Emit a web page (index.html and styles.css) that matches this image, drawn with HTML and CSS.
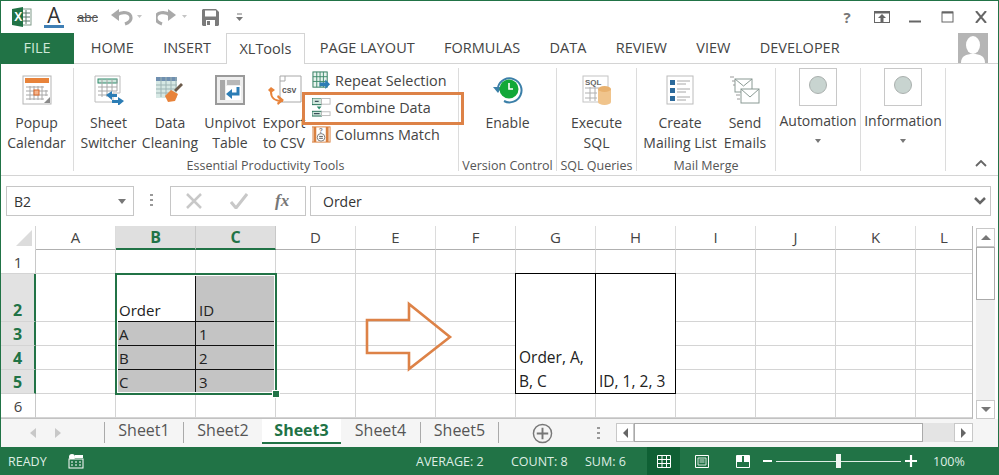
FILE: index.html
```html
<!DOCTYPE html>
<html lang="en">
<head>
<meta charset="utf-8">
<title>XLTools</title>
<link rel="stylesheet" href="styles.css">
</head>
<body>
<div class="window">
  <header class="titlebar">
    <svg class="qa q-excel" viewBox="0 0 20 20"><rect x="9" y="2" width="10" height="16" fill="#fff" stroke="#7f9a89"/><path d="M10 6h8M10 10h8M10 14h8M14 3v14" stroke="#58786a" fill="none"/><path d="M0 2l11-2v20L0 18z" fill="#217346"/><text x="2.3" y="14" class="xl">X</text></svg>
    <span class="qa q-a"><span class="a-letter">A</span><span class="a-bar"></span></span>
    <span class="qa q-abc">abc</span>
    <svg class="qa q-undo" viewBox="0 0 32 18"><path d="M0 7l8-6v12z" fill="#a9a9a9"/><path d="M6 7C11 3 20 4 20 10c0 3-3 5-6 6" fill="none" stroke="#a9a9a9" stroke-width="3.200"/><path d="M26 7h5l-2.500 3z" fill="#c4c4c4"/></svg>
    <svg class="qa q-redo" viewBox="0 0 32 18"><path d="M20 7l-8-6v12z" fill="#a9a9a9"/><path d="M14 7C9 3 0 4 0 10c0 3 3 5 6 6" fill="none" stroke="#a9a9a9" stroke-width="3.200"/><path d="M26 7h5l-2.500 3z" fill="#c4c4c4"/></svg>
    <svg class="qa q-save" viewBox="0 0 17 17"><path d="M1 0h13l3 3v13l-1 1H1l-1-1V1z" fill="#7b7b7b"/><rect x="3" y="1.500" width="11" height="6" fill="#fff"/><rect x="4" y="11" width="9" height="6" fill="#fff"/><rect x="5" y="12" width="3" height="4" fill="#7b7b7b"/></svg>
    <svg class="qa q-more" viewBox="0 0 8 9"><path d="M1 1h5" stroke="#777"/><path d="M0 4h7L3.500 8z" fill="#777"/></svg>
    <div class="winctl">
      <span class="help">?</span>
      <svg class="ctl" viewBox="0 0 16 12"><rect x=".5" y=".5" width="15" height="11" fill="none" stroke="#666"/><path d="M0 1.500h16" stroke="#666" stroke-width="2"/><path d="M8 3l4 4H9.500v4h-3V7H4z" fill="#666"/></svg>
      <svg class="ctl" viewBox="0 0 16 12"><path d="M2 10.500h12" stroke="#666" stroke-width="2"/></svg>
      <svg class="ctl" viewBox="0 0 16 12"><rect x="2" y="1" width="11" height="10" fill="none" stroke="#666"/><path d="M2 1.500h11" stroke="#666" stroke-width="2"/></svg>
      <svg class="ctl" viewBox="0 0 16 12"><path d="M3 0l10 12M13 0L3 12" stroke="#666" stroke-width="2" fill="none"/></svg>
    </div>
  </header>

  <nav class="tabs">
    <span class="tab file">FILE</span>
    <span class="tab">HOME</span>
    <span class="tab">INSERT</span>
    <span class="tab current">XLTools</span>
    <span class="tab">PAGE LAYOUT</span>
    <span class="tab">FORMULAS</span>
    <span class="tab">DATA</span>
    <span class="tab">REVIEW</span>
    <span class="tab">VIEW</span>
    <span class="tab">DEVELOPER</span>
    <svg class="avatar" viewBox="0 0 30 30"><rect width="30" height="30" fill="#b5b5b5"/><ellipse cx="15" cy="12" rx="7" ry="9" fill="#fff"/><path d="M3 30c0-7 5-9 12-9s12 2 12 9z" fill="#fff"/></svg>
  </nav>

  <section class="ribbon">
    <div class="group g-popup">
      <div class="items">
        <div class="btn b-popup">
          <svg class="ico" viewBox="0 0 30 30"><rect x="1" y="1" width="28" height="28" fill="#fff" stroke="#b5b5b5"/><rect x="3" y="3" width="24" height="5" fill="#e8833a"/><path d="M4 12h18M4 16h22M4 20h22M4 24h18M8 11v14M12 11v14M16 11v14M20 11v14M24 15v6" stroke="#a8a8a8" fill="none"/><rect x="12" y="15" width="5" height="5" fill="#f3b48c" stroke="#d9692b"/><path d="M28 28h-6l6-6z" fill="#8a8a8a"/></svg>
          <span class="lbl">Popup<br>Calendar</span>
        </div>
      </div>
    </div>

    <div class="group g-ess">
      <div class="items">
        <div class="btn b-sheet">
          <svg class="ico" viewBox="0 0 30 30"><path d="M1 1h25v17h-7v9H1z" fill="#fff" stroke="#bcbcbc"/><rect x="4" y="4" width="19" height="4" fill="#cfe6dc" stroke="#2d8a6a"/><path d="M4 12h19M4 16h19M4 20h10M8 4v18M13 4v18M18 4v12M23 4v12" stroke="#a8a8a8" fill="none"/><path d="M12 20l6-4v3h5v3h-5v3z" fill="#2c7db5"/><path d="M30 26l-6-4v3h-6v3h6v3z" fill="#2c7db5"/></svg>
          <span class="lbl">Sheet<br>Switcher</span>
        </div>
        <div class="btn b-data">
          <svg class="ico" viewBox="0 0 30 30"><rect x="1" y="2" width="21" height="4" fill="#6f8fb0"/><path d="M1 6h21v17H1z" fill="#d6e8e4"/><path d="M1 10h21M1 14h21M1 18h14M6 2v20M11 2v20M16 2v14M21 2v14" stroke="#9db4b4" fill="none"/><path d="M13 27l-3-6 6-6 7 4-3 7z" fill="#e8833a"/><path d="M19 15l7-7 2 2-7 7z" fill="#6b5a4a"/></svg>
          <span class="lbl">Data<br>Cleaning</span>
        </div>
        <div class="btn b-unpivot">
          <svg class="ico" viewBox="0 0 30 30"><rect x="1" y="1" width="28" height="28" fill="#eee" stroke="#9a9a9a" stroke-width="2"/><rect x="5" y="5" width="5" height="20" fill="#a8a8a8"/><rect x="12" y="5" width="13" height="5" fill="#b8b8b8"/><rect x="11" y="11" width="15" height="14" fill="#fff"/><path d="M23 12v7H15" fill="none" stroke="#2c7db5" stroke-width="3"/><path d="M17 14l-6 5 6 5z" fill="#2c7db5"/></svg>
          <span class="lbl">Unpivot<br>Table</span>
        </div>
        <div class="btn b-export">
          <svg class="ico wide" viewBox="0 0 36 30"><path d="M14 1h21v26H14V6z" fill="#fff" stroke="#a8a8a8"/><path d="M14 6h5V1" fill="none" stroke="#a8a8a8"/><text x="16" y="18" class="csv">CSV</text><path d="M5 12l4 3-4 3-3-3z" fill="#e8833a"/><path d="M5 17c0 6 3 9 12 9" fill="none" stroke="#e8833a" stroke-width="2"/><path d="M12 20l6 5-6 5-1-2 3-3-3-3z" fill="#e8833a"/></svg>
          <span class="lbl">Export<br>to CSV</span>
        </div>
        <div class="smalls">
          <div class="small">
            <svg class="sico" viewBox="0 0 20 20"><rect x="1" y="1" width="15" height="16" fill="#e8f3ee" stroke="#2d7a5c"/><path d="M5 1v16M8.500 1v16M12 1v16M1 6h15M1 11h15" stroke="#3e8a6c" fill="none"/><path d="M8 12h6V9l5 5-5 5v-3H8z" fill="#2c7db5"/></svg>
            <span>Repeat Selection</span>
          </div>
          <div class="small">
            <svg class="sico" viewBox="0 0 20 20"><rect x="0" y="0" width="10" height="7" fill="#cfe6dc" stroke="#1f6b52"/><path d="M3 3.500h4" stroke="#123"/><rect x="10" y=".5" width="9" height="6" fill="#fff" stroke="#bbb"/><path d="M5 9h5l-2.500 3z" fill="#2d8a6a"/><rect x="0" y="14" width="10" height="5" fill="#cfe6dc" stroke="#1f6b52"/><path d="M2 16.500h6" stroke="#123"/><rect x="10" y="14.500" width="9" height="4" fill="#fff" stroke="#bbb"/></svg>
            <span>Combine Data</span>
          </div>
          <div class="small">
            <svg class="sico" viewBox="0 0 20 20"><rect x="0" y="2" width="19" height="16" fill="#fff" stroke="#d9803f"/><path d="M3 2v16M16 2v16" stroke="#d9803f" stroke-width="3"/><circle cx="9.500" cy="13" r="4" fill="#fff" stroke="#777"/><path d="M7.500 12h4M7.500 14h4" stroke="#555"/><text x="7" y="8" class="q">?</text></svg>
            <span>Columns Match</span>
          </div>
          <div class="mark"></div>
        </div>
      </div>
      <div class="gname">Essential Productivity Tools</div>
    </div>

    <div class="group g-ver">
      <div class="items">
        <div class="btn b-full">
          <svg class="ico" viewBox="0 0 30 30"><path d="M5 12A12 12 0 1 1 11 26" fill="none" stroke="#3b7fa8" stroke-width="2"/><path d="M0 12h9l-4 6z" fill="#3b7fa8"/><circle cx="16" cy="14" r="9.500" fill="#12a838"/><path d="M16 8v6h4" fill="none" stroke="#fff" stroke-width="1.600"/></svg>
          <span class="lbl">Enable</span>
        </div>
      </div>
      <div class="gname">Version Control</div>
    </div>

    <div class="group g-sql">
      <div class="items">
        <div class="btn b-full">
          <svg class="ico" viewBox="0 0 30 30"><rect x="1" y="1" width="25" height="26" fill="#fff" stroke="#c4c4c4"/><text x="3" y="10" class="sqlt">SQL</text><path d="M3 13h14M3 18h12M3 23h12M8 12v14M13 12v14" stroke="#b0b0b0" fill="none"/><path d="M16 14h13v13a6.500 3 0 0 1-13 0z" fill="#f0c48c"/><ellipse cx="22.500" cy="14" rx="6.500" ry="3" fill="#e8b16e"/></svg>
          <span class="lbl">Execute<br>SQL</span>
        </div>
      </div>
      <div class="gname">SQL Queries</div>
    </div>

    <div class="group g-mail">
      <div class="items">
        <div class="btn b-create">
          <svg class="ico" viewBox="0 0 30 30"><rect x="2" y="1" width="26" height="28" fill="#fff" stroke="#bcbcbc"/><path d="M5 5h5v5H5zM5 13h5v5H5zM5 21h5v5H5z" fill="#2c6a9c"/><path d="M12 6h13M12 9h9M12 14h13M12 17h9M12 22h13M12 25h9" stroke="#a8a8a8" fill="none"/></svg>
          <span class="lbl">Create<br>Mailing List</span>
        </div>
        <div class="btn b-send">
          <svg class="ico" viewBox="0 0 30 30"><rect x="5" y="4" width="17" height="13" fill="#fff" stroke="#8a9a94"/><path d="M5 4l8.500 7L22 4" fill="none" stroke="#8a9a94"/><rect x="11" y="14" width="18" height="14" fill="#fff" stroke="#8a9a94"/><path d="M11 14l9 8 9-8" fill="none" stroke="#8a9a94"/><path d="M0 2h4M2 6h3M3 10h2M6 20h4M7 24h3" stroke="#9a9a9a" fill="none"/></svg>
          <span class="lbl">Send<br>Emails</span>
        </div>
      </div>
      <div class="gname">Mail Merge</div>
    </div>

    <div class="group g-auto">
      <div class="drop">
        <div class="tile"><span class="disc"></span></div>
        <span class="lbl">Automation</span>
        <span class="caret"></span>
      </div>
    </div>
    <div class="group g-info">
      <div class="drop">
        <div class="tile"><span class="disc"></span></div>
        <span class="lbl">Information</span>
        <span class="caret"></span>
      </div>
    </div>
    <svg class="collapse" viewBox="0 0 12 7"><path d="M1 6l5-5 5 5" fill="none" stroke="#666" stroke-width="1.800"/></svg>
  </section>

  <section class="fbar">
    <div class="namebox"><span>B2</span><i class="tri"></i></div>
    <span class="grip"></span>
    <div class="fbtns">
      <svg class="fb" viewBox="0 0 16 16"><path d="M1 1l14 14M15 1L1 15" stroke="#c8c8c8" stroke-width="2.500"/></svg>
      <svg class="fb" viewBox="0 0 18 16"><path d="M1 9l5 6L17 1" fill="none" stroke="#c8c8c8" stroke-width="3"/></svg>
      <span class="fx">fx</span>
    </div>
    <div class="finput"><span>Order</span><svg class="chev" viewBox="0 0 12 8"><path d="M1 1l5 5 5-5" fill="none" stroke="#666" stroke-width="2.500"/></svg></div>
  </section>

  <section class="sheetarea">
    <div class="grid">
      <div class="corner"><i></i></div>
      <div class="ch">A</div><div class="ch on">B</div><div class="ch on">C</div><div class="ch">D</div><div class="ch">E</div><div class="ch">F</div><div class="ch">G</div><div class="ch">H</div><div class="ch">I</div><div class="ch">J</div><div class="ch">K</div><div class="ch">L</div>

      <div class="rh">1</div><div class="c"></div><div class="c"></div><div class="c"></div><div class="c"></div><div class="c"></div><div class="c"></div><div class="c"></div><div class="c"></div><div class="c"></div><div class="c"></div><div class="c"></div><div class="c"></div>

      <div class="rh on">2</div><div class="c"></div><div class="c t tb">Order</div><div class="c t g tb">ID</div><div class="c"></div><div class="c"></div><div class="c"></div><div class="c box span-g">Order, A, B, C</div><div class="c box span-h">ID, 1, 2, 3</div><div class="c"></div><div class="c"></div><div class="c"></div><div class="c"></div>

      <div class="rh on">3</div><div class="c"></div><div class="c t g tb">A</div><div class="c t g tb">1</div><div class="c"></div><div class="c"></div><div class="c"></div><div class="c"></div><div class="c"></div><div class="c"></div><div class="c"></div>

      <div class="rh on">4</div><div class="c"></div><div class="c t g tb">B</div><div class="c t g tb">2</div><div class="c"></div><div class="c"></div><div class="c"></div><div class="c"></div><div class="c"></div><div class="c"></div><div class="c"></div>

      <div class="rh on">5</div><div class="c"></div><div class="c t g">C</div><div class="c t g">3</div><div class="c"></div><div class="c"></div><div class="c"></div><div class="c"></div><div class="c"></div><div class="c"></div><div class="c"></div>

      <div class="rh">6</div><div class="c"></div><div class="c"></div><div class="c"></div><div class="c"></div><div class="c"></div><div class="c"></div><div class="c"></div><div class="c"></div><div class="c"></div><div class="c"></div><div class="c"></div><div class="c"></div>

      <div class="sel"><i></i></div>
    </div>
    <svg class="arrow" viewBox="0 0 90 72"><path d="M2 20h42V4l41 33-41 32V53H2z" fill="none" stroke="#dd8247" stroke-width="2.600"/></svg>
    <div class="vscroll">
      <div class="sb"><i class="up"></i></div>
      <div class="thumb"></div>
      <div class="track"></div>
      <div class="sb"><i class="down"></i></div>
    </div>
  </section>

  <section class="sheettabs">
    <div class="nav"><i class="l"></i><i class="r"></i></div>
    <span class="st">Sheet1</span>
    <span class="st">Sheet2</span>
    <span class="st active">Sheet3</span>
    <span class="st nobar">Sheet4</span>
    <span class="st last">Sheet5</span>
    <svg class="plus" viewBox="0 0 22 22"><circle cx="11" cy="11" r="9.500" fill="none" stroke="#777" stroke-width="1.500"/><path d="M11 5v12M5 11h12" stroke="#777" stroke-width="2"/></svg>
    <span class="grip"></span>
    <div class="hscroll">
      <div class="sb h"><i class="lf"></i></div>
      <div class="hthumb"></div>
      <div class="htrack"></div>
      <div class="sb h"><i class="rt"></i></div>
    </div>
  </section>

  <footer class="status">
    <span class="ready">READY</span>
    <svg class="macro" viewBox="0 0 16 15"><circle cx="4" cy="3" r="3" fill="#fff"/><rect x="7" y="1" width="8" height="3" fill="#fff"/><rect x="1" y="5" width="14" height="9" fill="#217346" stroke="#fff"/><path d="M3 8h2M7 8h2M11 8h2M3 11h2M7 11h2M11 11h2" stroke="#fff"/></svg>
    <span class="stat s-avg">AVERAGE: 2</span>
    <span class="stat s-cnt">COUNT: 8</span>
    <span class="stat s-sum">SUM: 6</span>
    <span class="view on"><svg class="vi" viewBox="0 0 14 13"><path d="M.5.500h13v12H.500zM.5 4.500h13M.5 8.500h13M5 .5v12M9.500.5v12" fill="none" stroke="#fff"/></svg></span>
    <span class="view"><svg class="vi" viewBox="0 0 14 13"><path d="M.5.500h13v12H.500z" fill="none" stroke="#fff"/><path d="M3 3h8v7H3zM4.500 5h5M4.500 7h5" fill="none" stroke="#cfe3d6"/></svg></span>
    <span class="view"><svg class="vi" viewBox="0 0 14 13"><path d="M.5.500h13v12H.500z" fill="none" stroke="#fff"/><path d="M1 1h5v6H1zM8 1h5v6H8z" fill="#fff"/></svg></span>
    <div class="zoom">
      <i class="minus"></i>
      <div class="slider"><b></b></div>
      <svg class="zplus" viewBox="0 0 11 11"><path d="M5.500 0v11M0 5.500h11" stroke="#fff" stroke-width="2"/></svg>
      <span class="pct">100%</span>
    </div>
  </footer>
</div>
</body>
</html>
```

FILE: styles.css
```css
* { box-sizing: border-box; }
html, body { margin: 0; padding: 0; }
body { width: 999px; height: 475px; overflow: hidden; background: #fff; font-family: "Open Sans", "Noto Sans", sans-serif; color: #444; }
i { display: block; }

.window { width: 999px; height: 475px; border: 1px solid #217346; border-bottom: 0; display: flex; flex-direction: column; overflow: hidden; }

/* title bar */
.titlebar { height: 32px; flex: none; display: flex; align-items: center; }
.qa { display: block; flex: none; }
.q-excel { width: 20px; height: 20px; margin-left: 11px; }
.xl { font: bold 12px "Liberation Sans", sans-serif; fill: #fff; }
.q-a { width: 20px; height: 22px; margin-left: 12px; position: relative; text-align: center; }
.a-letter { display: block; font: 21px/19px "Open Sans", sans-serif; color: #333; }
.a-bar { display: block; height: 3px; background: #3f7fb5; }
.q-abc { margin-left: 13px; width: 22px; font: 13px "Liberation Sans", sans-serif; color: #555; text-decoration: line-through; }
.q-undo { width: 32px; height: 18px; margin-left: 12px; }
.q-redo { width: 32px; height: 18px; margin-left: 13px; }
.q-save { width: 17px; height: 17px; margin-left: 14px; }
.q-more { width: 8px; height: 9px; margin-left: 17px; }
.winctl { margin-left: auto; display: flex; align-items: center; margin-right: 9px; gap: 17px; }
.help { font: bold 15px "Open Sans", sans-serif; color: #777; width: 14px; text-align: center; margin-right: 3px; }
.ctl { width: 16px; height: 12px; display: block; }

/* tabs */
.tabs { height: 31px; flex: none; display: flex; border-bottom: 1px solid #d4d4d4; position: relative; margin-left: -1px; }
.tab { font-size: 14.500px; line-height: 30px; padding: 0 14.700px; color: #444; white-space: nowrap; }
.file { width: 74px; padding: 0; text-align: center; background: #217346; color: #cfe8d8; height: 31px; margin-right: 2px; }
.current { border: 1px solid #d4d4d4; border-bottom: 0; background: #fff; height: 31px; line-height: 29px; padding: 0 12.700px; }
.avatar { width: 30px; height: 30px; margin-left: auto; margin-right: 10px; display: block; }

/* ribbon */
.ribbon { height: 112px; flex: none; display: flex; border-bottom: 1px solid #d4d4d4; padding-top: 4px; padding-bottom: 4px; position: relative; margin-left: -1px; }
.group { display: flex; flex-direction: column; flex: none; border-right: 1px solid #dcdcdc; height: 103px; }
.items { display: flex; flex: none; height: 89px; }
.gname { font-size: 12.500px; line-height: 18px; text-align: center; color: #555; white-space: nowrap; }
.g-popup { width: 74px; }
.g-ess { width: 385px; padding-left: 5px; }
.g-ess .gname { padding-right: 6px; }
.g-ver { width: 98px; }
.g-sql { width: 80px; }
.g-mail { width: 139px; }
.g-auto { width: 85px; }
.g-info { width: 85px; }
.btn { display: flex; flex-direction: column; align-items: center; flex: none; padding-top: 7px; }
.b-popup { width: 73px; }
.b-sheet { width: 59px; }
.b-data { width: 64px; }
.b-unpivot { width: 56px; }
.b-export { width: 52px; }
.b-full { width: 100%; }
.b-create { width: 86px; }
.b-send { width: 44px; }
.ico { width: 30px; height: 30px; display: block; flex: none; }
.ico.wide { width: 36px; }
.lbl { font-size: 14px; line-height: 20px; text-align: center; margin-top: 8px; color: #444; white-space: nowrap; display: block; }
.csv { font: bold 8px "Liberation Mono", monospace; fill: #555; }
.sqlt { font: bold 8px "Liberation Sans", sans-serif; fill: #666; }
.q { font: bold 7px "Liberation Sans", sans-serif; fill: #777; }
.smalls { display: flex; flex-direction: column; margin-left: 2px; position: relative; flex: 1; gap: 7px; padding-top: 2.500px; }
.small { display: flex; align-items: center; gap: 4px; height: 20px; font-size: 14.400px; color: #444; white-space: nowrap; }
.sico { width: 19px; height: 19px; display: block; flex: none; }
.mark { position: absolute; left: -10px; top: 24px; width: 162px; height: 33px; border: 3px solid #dd8247; }
.drop { display: flex; flex-direction: column; align-items: center; }
.tile { width: 38px; height: 38px; border: 1px solid #c8c8c8; display: flex; align-items: center; justify-content: center; }
.disc { width: 18px; height: 18px; border-radius: 50%; background: #c8d4d0; border: 1px solid #aab0ae; margin-top: -4px; display: block; }
.drop .lbl { margin-top: 5px; }
.caret { width: 0; height: 0; border: 3px solid transparent; border-top: 4px solid #777; margin-top: 8px; }
.collapse { width: 12px; height: 7px; display: block; align-self: flex-end; margin-left: 29px; margin-bottom: 4px; }

/* formula bar */
.fbar { height: 50px; flex: none; display: flex; align-items: flex-start; padding: 10px 5px 0 5px; background: #fff; }
.namebox { width: 128px; height: 30px; border: 1px solid #c6c6c6; display: flex; align-items: center; justify-content: space-between; padding: 0 7px; font-size: 14px; color: #333; }
.tri { width: 0; height: 0; border: 4px solid transparent; border-top: 5px solid #777; margin-top: 4px; }
.grip { width: 3px; height: 13px; margin: 8px 17px 0 16px; display: block; flex: none; background: repeating-linear-gradient(#999 0 2px, transparent 2px 5px); }
.fbtns { width: 136px; height: 30px; border: 1px solid #c6c6c6; display: flex; align-items: center; padding-left: 14px; gap: 27px; margin-right: 4px; }
.fb { width: 18px; height: 16px; display: block; }
.fx { font: italic bold 17px "Liberation Serif", serif; color: #777; }
.finput { width: 681px; height: 30px; border: 1px solid #c6c6c6; display: flex; align-items: center; justify-content: space-between; padding: 0 4px 0 12px; font-size: 14px; color: #333; }
.chev { width: 12px; height: 8px; display: block; }

/* grid */
.sheetarea { height: 193px; flex: none; display: flex; position: relative; }
.grid { width: 972px; flex: none; display: grid; position: relative; grid-template-columns: 35px repeat(11, 80px) 57px; grid-template-rows: 24px 24px 48px 24px 24px 24px 24px; border-bottom: 1px solid #c2c2c2; border-right: 1px solid #b8b8b8; overflow: hidden; }
.corner { display: flex; align-items: flex-end; justify-content: flex-end; padding: 0 3px 4px 0; border-right: 1px solid #d4d4d4; }
.corner i { width: 0; height: 0; border-left: 16px solid transparent; border-bottom: 16px solid #dcdcdc; }
.ch { font-size: 15px; line-height: 22px; text-align: center; color: #444; border-right: 1px solid #dcdcdc; border-bottom: 1px solid #b0b0b0; }
.ch.on { background: #dfdfdf; color: #217346; font-weight: 700; font-size: 16px; border-bottom: 2px solid #217346; border-right-color: #c8c8c8; }
.rh { font-size: 15px; display: flex; align-items: flex-end; justify-content: center; line-height: 22px; border-right: 1px solid #c8c8c8; border-bottom: 1px solid #d4d4d4; color: #444; }
.rh.on { background: #e2e2e2; color: #217346; font-weight: 700; font-size: 16px; border-right: 2px solid #217346; }
.c { border-right: 1px solid #d4d4d4; border-bottom: 1px solid #d4d4d4; }
.t { font-size: 15px; line-height: 22px; color: #222; display: flex; align-items: flex-end; padding-left: 3px; border-right-color: #111; }
.g { background: #c4c4c4; }
.tb { border-bottom-color: #111; }
.box { grid-row: 3 / 7; border: 1px solid #000; display: flex; align-items: flex-end; padding: 0 3px; font-size: 15.500px; line-height: 24px; color: #222; background: #fff; margin-top: -1px; z-index: 1; }
.span-g { grid-column: 8; margin-left: -1px; }
.span-h { grid-column: 9; white-space: nowrap; border-left: 0; }
.sel { grid-column: 3 / 5; grid-row: 3 / 7; position: absolute; inset: -1px -1px -1px -1px; border: 2px solid #217346; box-shadow: inset 0 0 0 1px #fff; pointer-events: none; }
.sel i { position: absolute; right: -4px; bottom: -4px; width: 6px; height: 6px; background: #217346; outline: 1px solid #fff; }
.arrow { position: absolute; left: 364px; top: 74px; width: 90px; height: 72px; display: block; }
.vscroll { width: 19px; margin-left: 3px; margin-top: 2px; display: flex; flex-direction: column; background: #f1f1f1; }
.sb { border: 1px solid #c8c8c8; background: #fff; width: 19px; height: 19px; flex: none; display: flex; align-items: center; justify-content: center; }
.up { width: 0; height: 0; border: 5px solid transparent; border-bottom: 5px solid #777; border-top: 0; }
.down { width: 0; height: 0; border: 5px solid transparent; border-top: 5px solid #777; border-bottom: 0; }
.thumb { height: 53px; border: 1px solid #aaa; background: #fff; flex: none; }
.track { flex: 1; background: #f0f0f0; }

/* sheet tabs */
.sheettabs { height: 28px; flex: none; display: flex; align-items: flex-start; background: #f5f5f5; }
.nav { width: 103px; height: 24px; display: flex; align-items: center; gap: 19px; padding-left: 29px; flex: none; margin-top: 2px; }
.l { width: 0; height: 0; border: 5px solid transparent; border-right: 6px solid #c8c8c8; border-left: 0; }
.r { width: 0; height: 0; border: 5px solid transparent; border-left: 6px solid #c8c8c8; border-right: 0; }
.st { width: 79px; height: 21px; border-left: 1px solid #aaa; font-size: 16px; line-height: 16px; text-align: center; color: #555; flex: none; margin-top: 3px; white-space: nowrap; }
.active { height: 25px; background: #fff; border: 0; border-bottom: 2px solid #217346; color: #217346; font-weight: 700; margin-top: 0; padding-top: 3px; }
.nobar { border-left: 0; }
.last { border-right: 1px solid #aaa; }
.plus { width: 21px; height: 21px; display: block; margin: 4px 0 0 33px; flex: none; }
.sheettabs .grip { margin: 8px 16px 0 44px; }
.hscroll { display: flex; margin-top: 4px; flex: none; }
.sb.h { height: 19px; }
.sb.h:first-child { width: 18px; }
.lf { width: 0; height: 0; border: 5px solid transparent; border-right: 5px solid #666; border-left: 0; }
.rt { width: 0; height: 0; border: 5px solid transparent; border-left: 5px solid #666; border-right: 0; }
.hthumb { width: 289px; height: 19px; border: 1px solid #aaa; background: #fff; flex: none; }
.htrack { width: 31px; height: 19px; background: #e4e4e4; flex: none; }

/* status */
.status { height: 28px; flex: none; background: #217346; margin: 0 -1px; display: flex; align-items: center; color: #dfeee4; font-size: 12.500px; }
.ready { margin-left: 8px; width: 60px; }
.macro { width: 16px; height: 15px; display: block; flex: none; }
.stat { white-space: nowrap; flex: none; }
.s-avg { margin-left: 332px; width: 95px; }
.s-cnt { width: 74px; }
.s-sum { width: 62px; }
.view { width: 33px; height: 28px; display: flex; align-items: center; justify-content: center; flex: none; margin-right: 8px; }
.view.on { background: #0f6034; margin-right: 5px; }
.vi { width: 14px; height: 13px; display: block; }
.zoom { display: flex; align-items: center; flex: none; margin-left: -4px; }
.minus { width: 9px; height: 2px; background: #fff; }
.slider { width: 125px; height: 1px; background: #dfeee4; margin: 0 4px; display: flex; justify-content: center; align-items: center; }
.slider b { width: 5px; height: 14px; background: #f0f6f2; display: block; }
.zplus { width: 12px; height: 12px; display: block; }
.pct { margin-left: 16px; }
```
